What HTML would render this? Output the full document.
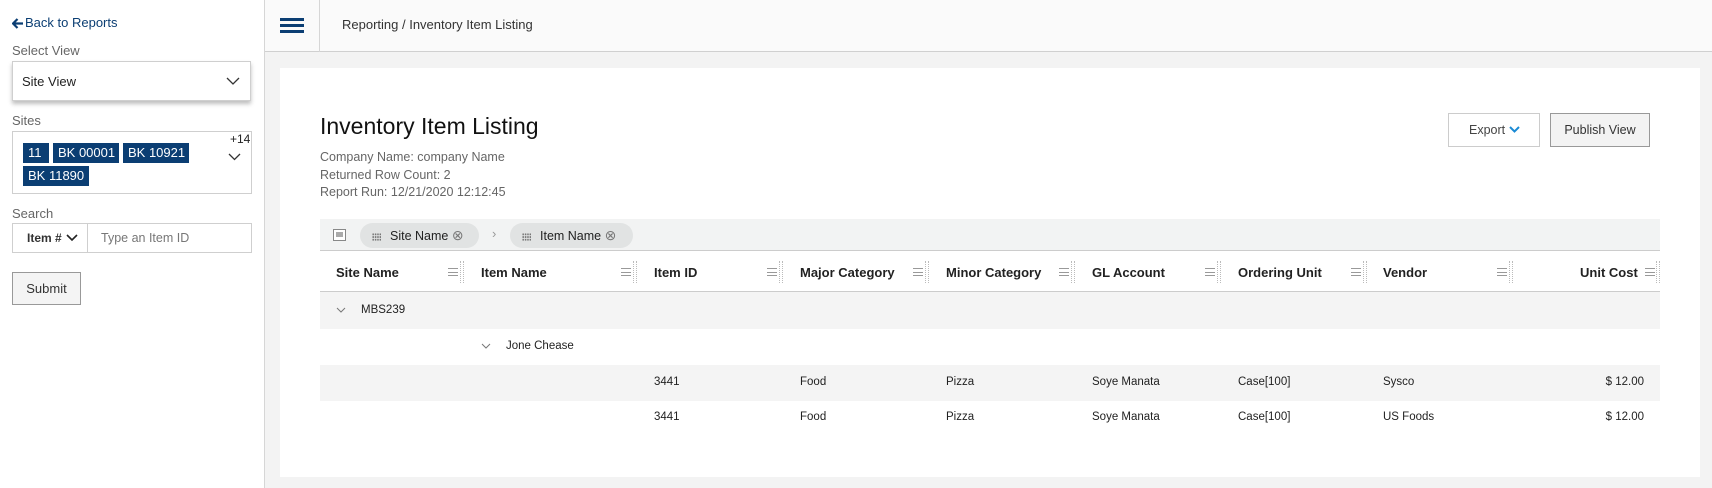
<!DOCTYPE html>
<html><head><meta charset="utf-8"><style>
*{box-sizing:border-box;margin:0;padding:0}
body{width:1712px;height:488px;overflow:hidden;background:#f3f3f3;font-family:"Liberation Sans",sans-serif;color:#222;position:relative}
.a{position:absolute;white-space:nowrap}
#side{left:0;top:0;width:265px;height:488px;background:#fff;border-right:1px solid #d6d6d6}
#hdr{left:265px;top:0;width:1447px;height:52px;background:#fafafa;border-bottom:1px solid #d0d0d0}
#card{left:280px;top:68px;width:1420px;height:409px;background:#fff}
.lbl{font-size:13px;color:#666}
.chip{background:#0b3e73;color:#fff;font-size:13px;height:20px;line-height:20px;padding:0 5px}
.box{border:1px solid #cfcfcf;background:#fff}
.th{font-size:13px;font-weight:bold;top:265px}
.td{font-size:11.5px;color:#222}
.srt{width:10px;height:8px;border-top:1px solid #999;border-bottom:1px solid #999}
.srt:after{content:"";position:absolute;left:0;right:0;top:2.5px;border-top:1px solid #999}
.dots{width:4px;height:22px;border-left:1px dotted #bbb;border-right:1px dotted #bbb}
.pill{background:#e1e3e3;border-radius:13px;height:25px;top:223px;font-size:12.5px;line-height:25px}
.grid{display:inline-block;width:9px;height:8px;margin:0 9px 0 12px;vertical-align:middle;background-image:radial-gradient(#777 0.8px,transparent 1px);background-size:2.4px 2.7px}
</style></head><body>
<div id="side" class="a"></div>
<svg class="a" style="left:12px;top:18px" width="11" height="11"><path d="M5.5 1L1 5.5 5.5 10M1 5.5h10" fill="none" stroke="#0b3e73" stroke-width="2.2"/></svg>
<div class="a" style="left:25px;top:15px;font-size:13px;color:#0b3e73">Back to Reports</div>
<div class="a lbl" style="left:12px;top:43px">Select View</div>
<div class="a box" style="left:12px;top:61px;width:239px;height:40px;box-shadow:0 3px 4px rgba(0,0,0,.25)"></div>
<div class="a" style="left:22px;top:74px;font-size:13px">Site View</div>
<svg class="a" style="left:226px;top:77px" width="14" height="9"><path d="M1 1l6 6 6-6" fill="none" stroke="#333" stroke-width="1.3"/></svg>
<div class="a lbl" style="left:12px;top:113px">Sites</div>
<div class="a box" style="left:12px;top:131px;width:240px;height:63px"></div>
<div class="a chip" style="left:23px;top:143px;width:26px">11</div>
<div class="a chip" style="left:53px;top:143px;width:66px">BK 00001</div>
<div class="a chip" style="left:123px;top:143px;width:66px">BK 10921</div>
<div class="a chip" style="left:23px;top:166px;width:66px">BK 11890</div>
<div class="a" style="left:230px;top:132px;font-size:12px">+14</div>
<svg class="a" style="left:228px;top:153px" width="13" height="8"><path d="M1 1l5.5 5.5L12 1" fill="none" stroke="#333" stroke-width="1.3"/></svg>
<div class="a lbl" style="left:12px;top:206px">Search</div>
<div class="a box" style="left:12px;top:223px;width:240px;height:30px"></div>
<div class="a" style="left:87px;top:223px;width:1px;height:30px;background:#cfcfcf"></div>
<div class="a" style="left:27px;top:231px;font-size:12px;font-weight:bold;color:#333">Item #</div>
<svg class="a" style="left:66px;top:234px" width="12" height="8"><path d="M1 1l5 5 5-5" fill="none" stroke="#222" stroke-width="1.6"/></svg>
<div class="a" style="left:101px;top:231px;font-size:12.5px;color:#777">Type an Item ID</div>
<div class="a" style="left:12px;top:272px;width:69px;height:33px;border:1px solid #999;background:#f4f4f4;font-size:13px;line-height:31px;text-align:center;color:#333">Submit</div>

<div id="hdr" class="a"></div>
<div class="a" style="left:280px;top:18px;width:24px;height:15px;border-top:3px solid #0b3e73;border-bottom:3px solid #0b3e73"></div>
<div class="a" style="left:280px;top:24px;width:24px;height:3px;background:#0b3e73"></div>
<div class="a" style="left:319px;top:0;width:1px;height:52px;background:#d6d6d6"></div>
<div class="a" style="left:342px;top:17px;font-size:13px;color:#333">Reporting / Inventory Item Listing</div>

<div id="card" class="a"></div>
<div class="a" style="left:320px;top:113px;font-size:23px;color:#111">Inventory Item Listing</div>
<div class="a" style="left:320px;top:149px;font-size:12.5px;color:#666;line-height:17.5px">Company Name: company Name<br>Returned Row Count: 2<br>Report Run: 12/21/2020 12:12:45</div>
<div class="a" style="left:1448px;top:113px;width:92px;height:34px;border:1px solid #ccc;font-size:12.5px;line-height:32px;color:#444;padding-left:20px">Export <svg width="11" height="8"><path d="M1 1l4.5 4.5L10 1" fill="none" stroke="#1a8ad4" stroke-width="2"/></svg></div>
<div class="a" style="left:1550px;top:113px;width:100px;height:34px;border:1px solid #999;background:#f3f3f3;font-size:12.5px;line-height:32px;text-align:center;color:#333">Publish View</div>

<div class="a" style="left:320px;top:219px;width:1340px;height:32px;background:#f2f3f3;border-bottom:1px solid #ccc"></div>
<div class="a" style="left:333px;top:229px;width:13px;height:12px;border:1px solid #888;background:#fff"></div>
<div class="a" style="left:336px;top:232px;width:7px;height:5px;background:#aaa"></div>
<div class="a pill" style="left:360px;width:119px"><span class="grid"></span>Site Name <span style="color:#777;font-size:14px">&#8855;</span></div>
<div class="a" style="left:492px;top:226px;color:#999;font-size:13px">&#8250;</div>
<div class="a pill" style="left:510px;width:123px"><span class="grid"></span>Item Name <span style="color:#777;font-size:14px">&#8855;</span></div>

<div class="a" style="left:320px;top:251px;width:1340px;height:41px;border-bottom:1px solid #ccc"></div>
<div class="a th" style="left:336px">Site Name</div>
<div class="a th" style="left:481px">Item Name</div>
<div class="a th" style="left:654px">Item ID</div>
<div class="a th" style="left:800px">Major Category</div>
<div class="a th" style="left:946px">Minor Category</div>
<div class="a th" style="left:1092px">GL Account</div>
<div class="a th" style="left:1238px">Ordering Unit</div>
<div class="a th" style="left:1383px">Vendor</div>
<div class="a th" style="left:1580px">Unit Cost</div>
<div class="a srt" style="left:448px;top:268px"></div><div class="a dots" style="left:460px;top:261px"></div>
<div class="a srt" style="left:621px;top:268px"></div><div class="a dots" style="left:633px;top:261px"></div>
<div class="a srt" style="left:767px;top:268px"></div><div class="a dots" style="left:779px;top:261px"></div>
<div class="a srt" style="left:913px;top:268px"></div><div class="a dots" style="left:925px;top:261px"></div>
<div class="a srt" style="left:1059px;top:268px"></div><div class="a dots" style="left:1071px;top:261px"></div>
<div class="a srt" style="left:1205px;top:268px"></div><div class="a dots" style="left:1217px;top:261px"></div>
<div class="a srt" style="left:1351px;top:268px"></div><div class="a dots" style="left:1363px;top:261px"></div>
<div class="a srt" style="left:1497px;top:268px"></div><div class="a dots" style="left:1509px;top:261px"></div>
<div class="a srt" style="left:1645px;top:268px"></div><div class="a dots" style="left:1656px;top:261px"></div>

<div class="a" style="left:320px;top:292px;width:1340px;height:37px;background:#f4f4f4"></div>
<svg class="a" style="left:336px;top:307px" width="10" height="6"><path d="M1 1l4 4 4-4" fill="none" stroke="#777"/></svg>
<div class="a td" style="left:361px;top:304px">MBS239</div>
<svg class="a" style="left:481px;top:343px" width="10" height="6"><path d="M1 1l4 4 4-4" fill="none" stroke="#777"/></svg>
<div class="a td" style="left:506px;top:340px">Jone Chease</div>
<div class="a" style="left:320px;top:365px;width:1340px;height:36px;background:#f4f4f4"></div>
<div class="a td" style="left:654px;top:376px">3441</div><div class="a td" style="left:800px;top:376px">Food</div><div class="a td" style="left:946px;top:376px">Pizza</div><div class="a td" style="left:1092px;top:376px">Soye Manata</div><div class="a td" style="left:1238px;top:376px">Case[100]</div><div class="a td" style="left:1383px;top:376px">Sysco</div><div class="a td" style="left:1594px;top:376px;width:50px;text-align:right">$ 12.00</div>
<div class="a td" style="left:654px;top:411px">3441</div><div class="a td" style="left:800px;top:411px">Food</div><div class="a td" style="left:946px;top:411px">Pizza</div><div class="a td" style="left:1092px;top:411px">Soye Manata</div><div class="a td" style="left:1238px;top:411px">Case[100]</div><div class="a td" style="left:1383px;top:411px">US Foods</div><div class="a td" style="left:1594px;top:411px;width:50px;text-align:right">$ 12.00</div>
</body></html>
